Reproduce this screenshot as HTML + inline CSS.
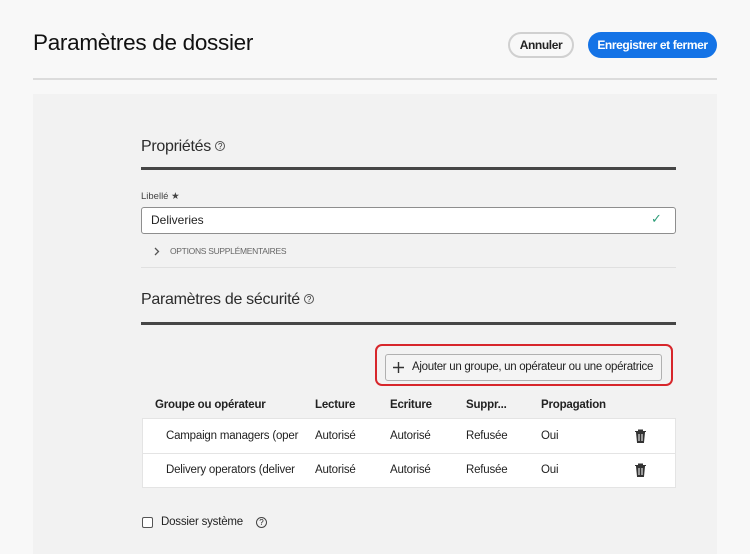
<!DOCTYPE html>
<html><head><meta charset="utf-8"><style>
*{margin:0;padding:0;box-sizing:border-box}
body{width:750px;height:545px;background:#f8f8f8;font-family:"Liberation Sans",sans-serif;color:#222;position:relative;overflow:hidden}
.a{position:absolute;white-space:nowrap}
.btn{position:absolute;border-radius:14px;font-size:12px;font-weight:bold;display:flex;align-items:center;justify-content:center;letter-spacing:-0.4px}
.hl{position:absolute;left:141px;width:535px;height:3px;background:#464646}
.th{font-size:11.5px;font-weight:bold;top:399px;letter-spacing:-0.2px}
.td{font-size:11.5px;letter-spacing:-0.2px}
</style></head><body>
<div class="a" style="left:33px;top:30px;font-size:22.5px;letter-spacing:-0.3px;color:#111">Paramètres de dossier</div>
<div class="btn" style="left:508px;top:32px;width:66px;height:26px;border:2px solid #d0d0d0;background:#f8f8f8;color:#222">Annuler</div>
<div class="btn" style="left:588px;top:32px;width:129px;height:26px;background:#1473e6;color:#fff">Enregistrer et fermer</div>
<div class="a" style="left:33px;top:78px;width:684px;height:2px;background:#dcdcdc"></div>
<div class="a" style="left:33px;top:94px;width:684px;height:460px;background:#f2f2f2"></div>

<div class="a" style="left:141px;top:138px;font-size:16px;color:#2c2c2c;letter-spacing:-0.3px">Propriétés <span style="border:1px solid #555;border-radius:50%;display:inline-block;width:10px;height:10px;line-height:9px;text-align:center;vertical-align:2px;font-size:8px">?</span></div>
<div class="hl" style="top:167px"></div>
<div class="a" style="left:141px;top:191px;font-size:9.5px;color:#444">Libellé ★</div>
<div class="a" style="left:141px;top:207px;width:535px;height:27px;background:#fff;border:1px solid #8e8e8e;border-radius:3px"></div>
<div class="a" style="left:151px;top:213px;font-size:12px;color:#222">Deliveries</div>
<div class="a" style="left:651px;top:211px;font-size:13px;color:#2d9d78">✓</div>
<svg class="a" style="left:154px;top:247px" width="6" height="9" viewBox="0 0 6 9"><path d="M1 1l3.5 3.5L1 8" fill="none" stroke="#555" stroke-width="1.3"/></svg>
<div class="a" style="left:170px;top:246px;font-size:8.5px;color:#666;letter-spacing:-0.3px">OPTIONS SUPPLÉMENTAIRES</div>
<div class="a" style="left:141px;top:267px;width:535px;height:1px;background:#e0e0e0"></div>

<div class="a" style="left:141px;top:291px;font-size:16px;color:#2c2c2c;letter-spacing:-0.3px">Paramètres de sécurité <span style="border:1px solid #555;border-radius:50%;display:inline-block;width:10px;height:10px;line-height:9px;text-align:center;vertical-align:2px;font-size:8px">?</span></div>
<div class="hl" style="top:322px"></div>
<div class="a" style="left:375px;top:344px;width:298px;height:42px;border:2px solid #d7262b;border-radius:7px"></div>
<div class="a" style="left:385px;top:354px;width:277px;height:27px;border:1px solid #b0b0b0;border-radius:3px;background:#f4f4f4"></div>
<svg class="a" style="left:393px;top:362px" width="11" height="11" viewBox="0 0 11 11"><path d="M5.5 0v11M0 5.5h11" stroke="#333" stroke-width="1.4"/></svg>
<div class="a" style="left:412px;top:361px;font-size:11.5px;color:#222;letter-spacing:-0.3px">Ajouter un groupe, un opérateur ou une opératrice</div>

<div class="a th" style="left:155px">Groupe ou opérateur</div>
<div class="a th" style="left:315px">Lecture</div>
<div class="a th" style="left:390px">Ecriture</div>
<div class="a th" style="left:466px">Suppr...</div>
<div class="a th" style="left:541px">Propagation</div>
<div class="a" style="left:142px;top:418px;width:534px;height:70px;background:#fff;border:1px solid #e4e4e4"></div>
<div class="a" style="left:142px;top:453px;width:534px;height:1px;background:#e4e4e4"></div>
<div class="a td" style="left:166px;top:430px">Campaign managers (oper</div>
<div class="a td" style="left:315px;top:430px">Autorisé</div>
<div class="a td" style="left:390px;top:430px">Autorisé</div>
<div class="a td" style="left:466px;top:430px">Refusée</div>
<div class="a td" style="left:541px;top:430px">Oui</div>
<div class="a td" style="left:166px;top:464px">Delivery operators (deliver</div>
<div class="a td" style="left:315px;top:464px">Autorisé</div>
<div class="a td" style="left:390px;top:464px">Autorisé</div>
<div class="a td" style="left:466px;top:464px">Refusée</div>
<div class="a td" style="left:541px;top:464px">Oui</div>
<svg class="a" style="left:634px;top:429px" width="13" height="14" viewBox="0 0 13 14"><path d="M1 2.5h11M4.5 2.5V1h4v1.5M2.5 3.5l1 10h6l1-10z" fill="#333" stroke="#333" stroke-width="1"/><path d="M5 5v7M8 5v7" stroke="#fff" stroke-width="1"/></svg>
<svg class="a" style="left:634px;top:463px" width="13" height="14" viewBox="0 0 13 14"><path d="M1 2.5h11M4.5 2.5V1h4v1.5M2.5 3.5l1 10h6l1-10z" fill="#333" stroke="#333" stroke-width="1"/><path d="M5 5v7M8 5v7" stroke="#fff" stroke-width="1"/></svg>

<div class="a" style="left:142px;top:517px;width:11px;height:11px;border:1.5px solid #555;border-radius:2px;background:#fff"></div>
<div class="a" style="left:161px;top:516px;font-size:11.5px;color:#222;letter-spacing:-0.2px">Dossier système</div>
<div class="a" style="left:256px;top:517px;width:11px;height:11px;border:1px solid #444;border-radius:50%;font-size:8px;text-align:center;line-height:10px">?</div>
</body></html>
